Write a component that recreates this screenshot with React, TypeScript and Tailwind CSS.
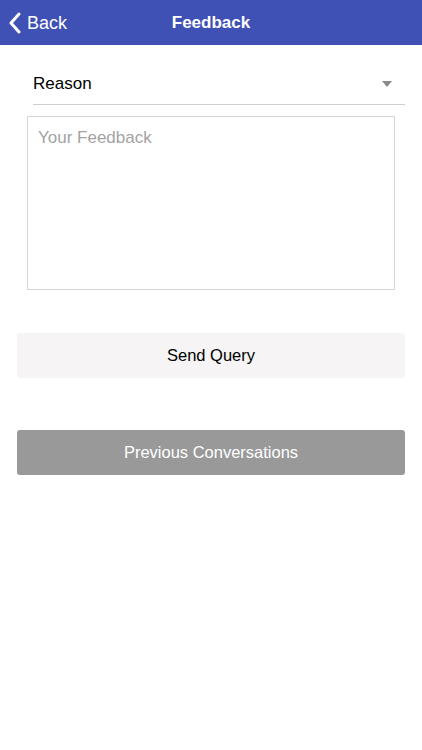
export default function App() {
  return (
    <div className="min-h-[750px] w-[422px] bg-white font-['Liberation_Sans',Arial,sans-serif]">
      <header className="relative flex h-[45px] items-center bg-[#3f51b5] text-white">
        <button className="flex items-center gap-[6px] pl-[8px]">
          <svg width="13" height="22" viewBox="0 0 13 22" fill="none">
            <path d="M11 2 L3 11 L11 20" stroke="white" strokeWidth="3" strokeLinecap="round" strokeLinejoin="round" />
          </svg>
          <span className="text-[18px] leading-none">Back</span>
        </button>
        <h1 className="absolute left-1/2 -translate-x-1/2 text-[17px] font-bold leading-none">Feedback</h1>
      </header>

      <div className="px-[17px]">
        <div className="ml-[16px] mt-[18px] flex h-[42px] items-center justify-between border-b border-[#cfcfcf]">
          <span className="text-[17px] text-black">Reason</span>
          <svg width="10" height="6" viewBox="0 0 10 6" className="mr-[13px]">
            <path d="M0 0 H10 L5 6 Z" fill="#8a8a8a" />
          </svg>
        </div>

        <div className="ml-[10px] mr-[10px] mt-[11px] h-[174px] border border-[#d6d6d6] px-[10px] pt-[8px]">
          <span className="text-[17px] text-[#a3a3a3]">Your Feedback</span>
        </div>

        <button className="mt-[43px] flex h-[45px] w-full items-center justify-center rounded-[3px] bg-[#f6f4f5] text-[16.5px] text-black">
          Send Query
        </button>

        <button className="mt-[52px] flex h-[45px] w-full items-center justify-center rounded-[3px] bg-[#999999] text-[16.5px] text-white">
          Previous Conversations
        </button>
      </div>
    </div>
  );
}
